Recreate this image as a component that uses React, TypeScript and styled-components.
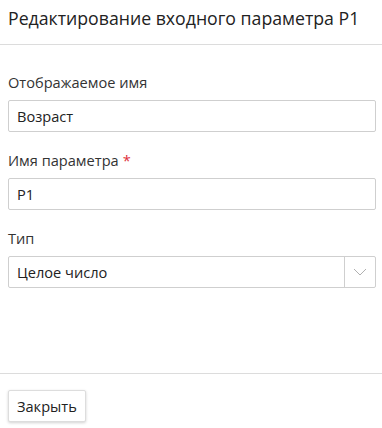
import styled, { createGlobalStyle } from 'styled-components';

const GlobalStyle = createGlobalStyle({
    "html, body": {
        margin: 0,
        padding: 0,
        background: "#fff",
    },
    body: {
        fontFamily: "'Open Sans', 'Noto Sans', sans-serif",
        color: "#333",
    },
});

const Dialog = styled.div({
    display: "flex",
    flexDirection: "column",
    height: "100vh",
    boxSizing: "border-box",
});

const Header = styled.div({
    padding: "6px 8px 14px",
    borderBottom: "1px solid #dcdcdc",
});

const Title = styled.h1({
    margin: 0,
    fontSize: "17.7px",
    lineHeight: "24px",
    fontWeight: 400,
    color: "#222",
});

const Body = styled.div({
    flex: 1,
    display: "flex",
    flexDirection: "column",
    gap: "18px",
    padding: "27px 6px 0 8px",
});

const Field = styled.div({
    display: "flex",
    flexDirection: "column",
    gap: "8px",
});

const Label = styled.label({
    fontSize: "14.6px",
    lineHeight: "20px",
    color: "#333",
});

const Required = styled.span({
    color: "#e0303a",
    marginLeft: "4px",
});

const Input = styled.input({
    height: "32px",
    boxSizing: "border-box",
    border: "1px solid #cfcfcf",
    borderRadius: "2px",
    padding: "0 8px",
    fontFamily: "inherit",
    fontSize: "14.6px",
    color: "#222",
    outline: "none",
});

const Select = styled.div({
    display: "flex",
    height: "32px",
    boxSizing: "border-box",
    border: "1px solid #cfcfcf",
    borderRadius: "2px",
});

const SelectValue = styled.div({
    flex: 1,
    display: "flex",
    alignItems: "center",
    padding: "0 8px",
    fontSize: "14.6px",
    color: "#222",
});

const SelectArrow = styled.div({
    width: "30px",
    borderLeft: "1px solid #cfcfcf",
    display: "flex",
    alignItems: "center",
    justifyContent: "center",
});

const Footer = styled.div({
    borderTop: "1px solid #dcdcdc",
    padding: "16px 8px 6px",
});

const Button = styled.button({
    height: "32px",
    padding: "0 8px",
    background: "#fff",
    border: "1px solid #ddd",
    borderRadius: "2px",
    boxShadow: "0 1px 3px rgba(0,0,0,0.18)",
    fontFamily: "inherit",
    fontSize: "14.6px",
    color: "#222",
    cursor: "pointer",
});

export default function App() {
    return (
        <Dialog>
            <GlobalStyle />
            <Header>
                <Title>Редактирование входного параметра P1</Title>
            </Header>
            <Body>
                <Field>
                    <Label>Отображаемое имя</Label>
                    <Input defaultValue="Возраст" />
                </Field>
                <Field>
                    <Label>Имя параметра<Required>*</Required></Label>
                    <Input defaultValue="P1" />
                </Field>
                <Field>
                    <Label>Тип</Label>
                    <Select>
                        <SelectValue>Целое число</SelectValue>
                        <SelectArrow>
                            <svg width="14" height="8" viewBox="0 0 14 8">
                                <path d="M1 1 L7 7 L13 1" fill="none" stroke="#b0b0b0" strokeWidth="1" />
                            </svg>
                        </SelectArrow>
                    </Select>
                </Field>
            </Body>
            <Footer>
                <Button>Закрыть</Button>
            </Footer>
        </Dialog>
    );
}
